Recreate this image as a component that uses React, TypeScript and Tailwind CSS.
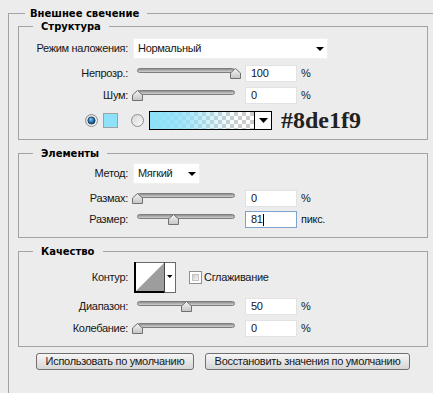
import React from "react";

function Legend({ children, outer }: { children: React.ReactNode; outer?: boolean }) {
  return outer ? (
    <div className="-mt-[7px] ml-[7px] w-fit h-[13px] leading-[13px] bg-[#ececec] pl-[5px] pr-[8px] font-['DejaVu_Sans',Verdana,sans-serif] font-bold text-[10px] tracking-normal text-black whitespace-nowrap">
      {children}
    </div>
  ) : (
    <div className="-mt-[7px] -mb-[6px] ml-[14px] w-fit h-[13px] leading-[13px] bg-[#ececec] px-[8px] font-['DejaVu_Sans',Verdana,sans-serif] font-bold text-[10px] tracking-normal text-black whitespace-nowrap">
      {children}
    </div>
  );
}

function Label({ children }: { children: React.ReactNode }) {
  return <div className="w-[109px] shrink-0 text-right whitespace-nowrap">{children}</div>;
}

function Arrow() {
  return (
    <svg width="8" height="4" viewBox="0 0 8 4">
      <path d="M0 0H8L4 4Z" fill="#000" />
    </svg>
  );
}

function Slider({ pos }: { pos: number }) {
  return (
    <div className="relative w-[112px] h-[17px] shrink-0">
      <div className="absolute left-[4px] top-[3px] w-[98px] h-[5px] rounded-full border border-[#7d7d7d] bg-gradient-to-b from-[#8f8f8f] to-[#d2d2d2]" />
      <svg className="absolute top-[3px]" style={{ left: pos - 5.5 }} width="11" height="11" viewBox="0 0 11 11">
        <defs>
          <linearGradient id="thumbg" x1="0" y1="0" x2="0" y2="1">
            <stop offset="0" stopColor="#f4f4f4" />
            <stop offset="1" stopColor="#c4c4c4" />
          </linearGradient>
        </defs>
        <path d="M5.5 0.5L10.5 5V10.5H0.5V5Z" fill="url(#thumbg)" stroke="#707070" />
      </svg>
    </div>
  );
}

function NumBox({ value, focused }: { value: string; focused?: boolean }) {
  return (
    <div
      className={
        focused
          ? "w-[52px] h-[17px] shrink-0 bg-white border border-[#7da2ce] pl-[5px] flex items-center"
          : "w-[52px] h-[17px] shrink-0 bg-white border border-[#e2e2e2] pl-[5px] flex items-center"
      }
    >
      <span className="text-[#141414]">{value}</span>
      {focused && <span className="w-px h-[12px] bg-black" />}
    </div>
  );
}

function SliderRow({
  label,
  pos,
  value,
  unit,
  focused,
  className,
}: {
  label: string;
  pos: number;
  value: string;
  unit: string;
  focused?: boolean;
  className: string;
}) {
  return (
    <div className={className}>
      <Label>{label}</Label>
      <div className="ml-[5px] flex items-center">
        <Slider pos={pos} />
        <NumBox value={value} focused={focused} />
        <span className="ml-[4px] whitespace-nowrap">{unit}</span>
      </div>
    </div>
  );
}

function Radio({ on }: { on?: boolean }) {
  return (
    <svg width="13" height="13" viewBox="0 0 13 13" className="shrink-0">
      <defs>
        <linearGradient id="radg" x1="0" y1="0" x2="1" y2="1">
          <stop offset="0" stopColor="#d6d6d6" />
          <stop offset="1" stopColor="#fbfbfb" />
        </linearGradient>
        <radialGradient id="dotg" cx="0.4" cy="0.35" r="0.7">
          <stop offset="0" stopColor="#7cc8f4" />
          <stop offset="0.6" stopColor="#1f6fae" />
          <stop offset="1" stopColor="#0d3659" />
        </radialGradient>
      </defs>
      <circle cx="6.5" cy="6.5" r="6" fill="url(#radg)" stroke="#8c8e90" />
      {on && <circle cx="6.5" cy="6.5" r="3.6" fill="url(#dotg)" stroke="#10324f" strokeWidth="0.8" />}
    </svg>
  );
}

function Contour() {
  return (
    <svg width="42" height="31" viewBox="0 0 42 31" className="shrink-0">
      <rect x="0.5" y="0.5" width="41" height="30" fill="#fff" stroke="#6a6a6a" />
      <path d="M2 29L30 1V29Z" fill="#9d9d9d" />
      <rect x="0" y="0" width="2" height="31" fill="#000" />
      <rect x="0" y="29" width="30" height="2" fill="#000" />
      <rect x="30" y="0" width="1" height="31" fill="#444" />
      <path d="M33 13H38.5L35.75 16Z" fill="#000" />
    </svg>
  );
}

function Checkbox() {
  return (
    <div className="w-[13px] h-[13px] shrink-0 border border-[#8e8f8f] bg-white p-[2px]">
      <div className="w-full h-full bg-gradient-to-br from-[#cfcfcf] to-[#f4f4f4] border border-[#c4c4c4]" />
    </div>
  );
}

export default function App() {
  return (
    <div className="w-[433px] h-[393px] overflow-hidden bg-[#ececec] text-[11px] tracking-[-0.3px] text-[#161616] font-['Liberation_Sans',Arial,sans-serif]">
      <div className="mt-[13px] ml-[8px] w-[600px] h-[500px] border-l border-t border-[#a3a3a3] pl-[9px]">
        <Legend outer>Внешнее свечение</Legend>

        {/* Структура */}
        <div className="mt-[6px] w-[410px] h-[114px] border border-[#a3a3a3]">
          <Legend>Структура</Legend>
          <div className="mt-[11px] flex items-center h-[21px]">
            <Label>Режим наложения:</Label>
            <div className="ml-[5px] w-[195px] h-[21px] bg-white border border-[#f0f0f0] pl-[4px] pr-[3px] flex items-center justify-between">
              <span>Нормальный</span>
              <Arrow />
            </div>
          </div>
          <SliderRow className="mt-[6px] flex items-center h-[17px]" label="Непрозр.:" pos={102} value="100" unit="%" />
          <SliderRow className="mt-[5px] flex items-center h-[17px]" label="Шум:" pos={4} value="0" unit="%" />
          <div className="mt-[6px] flex items-center h-[20px] pl-[66px]">
            <Radio on />
            <div className="ml-[5px] w-[15px] h-[15px] bg-[#8de1f9] border border-[#a0a0a0] shrink-0" />
            <div className="ml-[13px]">
              <Radio />
            </div>
            <div className="ml-[5px] w-[123px] h-[19px] border border-black flex shrink-0 bg-white">
              <div className="flex-1 [background-image:linear-gradient(90deg,#8de1f9_0%,rgba(141,225,249,0.85)_30%,rgba(141,225,249,0.35)_60%,rgba(141,225,249,0)_85%),repeating-conic-gradient(#cdcdcd_0%_25%,#ffffff_0%_50%)] [background-size:100%_100%,8px_8px]" />
              <div className="w-[17px] border-l border-black flex items-center justify-center bg-white">
                <svg width="9" height="5" viewBox="0 0 9 5">
                  <path d="M0 0H9L4.5 5Z" fill="#000" />
                </svg>
              </div>
            </div>
            <div className="ml-[9px] font-['Liberation_Serif','Times_New_Roman',serif] font-bold text-[24px] leading-[20px] tracking-normal text-[#222] whitespace-nowrap">
              #8de1f9
            </div>
          </div>
        </div>

        {/* Элементы */}
        <div className="mt-[13px] w-[410px] h-[85px] border border-[#a3a3a3]">
          <Legend>Элементы</Legend>
          <div className="mt-[9px] flex items-center h-[21px]">
            <Label>Метод:</Label>
            <div className="ml-[5px] w-[67px] h-[21px] bg-white border border-[#f0f0f0] pl-[4px] pr-[3px] flex items-center justify-between">
              <span>Мягкий</span>
              <Arrow />
            </div>
          </div>
          <SliderRow className="mt-[6px] flex items-center h-[17px]" label="Размах:" pos={4} value="0" unit="%" />
          <SliderRow className="mt-[4px] flex items-center h-[17px]" label="Размер:" pos={40} value="81" unit="пикс." focused />
        </div>

        {/* Качество */}
        <div className="mt-[13px] w-[410px] h-[96px] border border-[#a3a3a3]">
          <Legend>Качество</Legend>
          <div className="mt-[10px] flex items-center h-[31px]">
            <Label>Контур:</Label>
            <div className="ml-[6px]">
              <Contour />
            </div>
            <div className="ml-[13px]">
              <Checkbox />
            </div>
            <span className="ml-[2px]">Сглаживание</span>
          </div>
          <SliderRow className="mt-[5px] flex items-center h-[17px]" label="Диапазон:" pos={53} value="50" unit="%" />
          <SliderRow className="mt-[5px] flex items-center h-[17px]" label="Колебание:" pos={4} value="0" unit="%" />
        </div>

        {/* Buttons */}
        <div className="mt-[6px] flex items-center pl-[18px]">
          <div className="w-[158px] h-[17px] border border-[#707070] rounded-[3px] bg-gradient-to-b from-[#f6f6f6] to-[#d6d6d6] flex items-center justify-center whitespace-nowrap">
            Использовать по умолчанию
          </div>
          <div className="ml-[11px] w-[205px] h-[17px] border border-[#707070] rounded-[3px] bg-gradient-to-b from-[#f6f6f6] to-[#d6d6d6] flex items-center justify-center whitespace-nowrap">
            Восстановить значения по умолчанию
          </div>
        </div>
      </div>
    </div>
  );
}
